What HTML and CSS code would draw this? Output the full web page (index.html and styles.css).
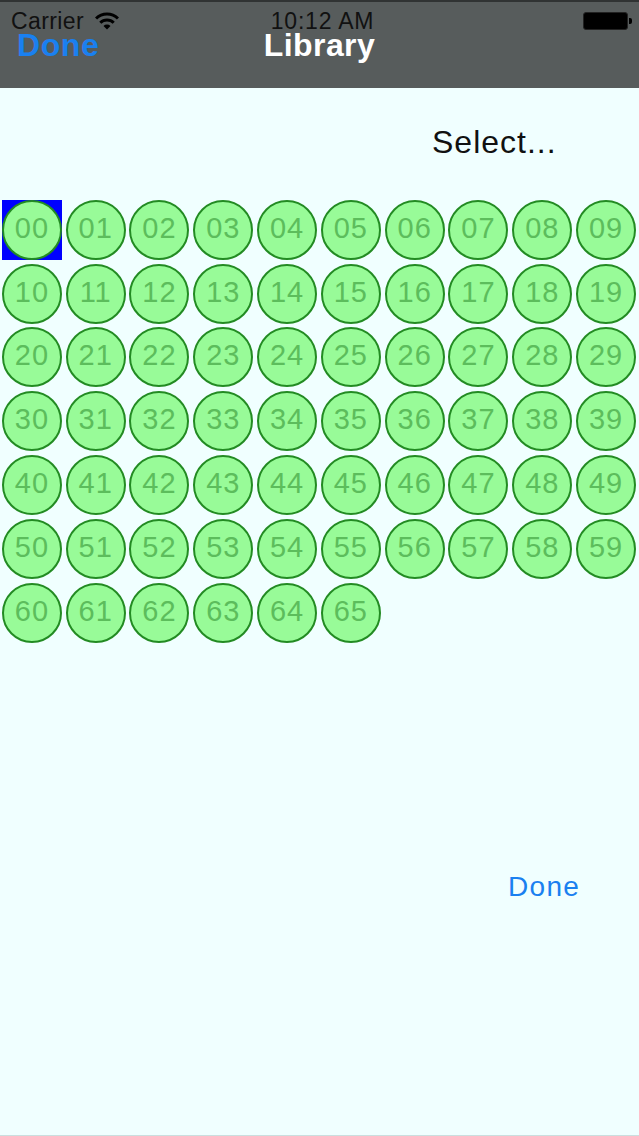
FILE: index.html
```
<!DOCTYPE html>
<html>
<head>
<meta charset="utf-8">
<title>Library</title>
<link rel="stylesheet" href="styles.css">
</head>
<body>
<div class="screen">
  <header class="header">
    <div class="status">
      <div class="status-left">
        <span class="carrier">Carrier</span>
        <svg class="wifi" width="24" height="18" viewBox="0 0 24 18">
          <path d="M1.04 6.54 A15.5 15.5 0 0 1 22.96 6.54" fill="none" stroke="#000" stroke-width="3"/>
          <path d="M5.28 10.78 A9.5 9.5 0 0 1 18.72 10.78" fill="none" stroke="#000" stroke-width="3"/>
          <path d="M12 17.5 L8.5 14 A5 5 0 0 1 15.5 14 Z" fill="#000"/>
        </svg>
      </div>
      <div class="time">10:12 AM</div>
      <div class="status-right">
        <span class="battery"><span class="battery-nub"></span></span>
      </div>
    </div>
    <div class="nav">
      <div class="nav-left"><span class="nav-done">Done</span></div>
      <div class="nav-title">Library</div>
      <div class="nav-right"></div>
    </div>
  </header>
  <main class="content">
    <div class="select">Select...</div>
    <div class="grid" id="grid"></div>
    <div class="bottom-done">Done</div>
  </main>
</div>
<script src="app.js"></script>
</body>
</html>
```
FILE: app.js
```
var grid = document.getElementById('grid');
for (var i = 0; i < 66; i++) {
  var cell = document.createElement('div');
  cell.className = 'cell' + (i === 0 ? ' selected' : '');
  var box = document.createElement('div');
  box.className = 'box';
  var c = document.createElement('div');
  c.className = 'circle';
  var t = String(Math.floor(i / 10)) + String(i % 10);
  c.textContent = t;
  box.appendChild(c);
  cell.appendChild(box);
  grid.appendChild(cell);
}
```
FILE: styles.css
```
html, body {
  margin: 0;
  padding: 0;
}
body {
  background: #f0ffff;
  font-family: "Liberation Sans", Arial, sans-serif;
}
.screen {
  height: 1136px;
  box-sizing: border-box;
  border-bottom: 1px solid #cadfdf;
  display: flex;
  flex-direction: column;
}
.header {
  height: 88px;
  box-sizing: border-box;
  background: #575c5c;
  border-top: 2px solid #303333;
}
.status {
  display: grid;
  grid-template-columns: 1fr auto 1fr;
  align-items: end;
  height: 29px;
}
.status-left {
  display: flex;
  align-items: flex-end;
  padding-left: 11px;
  gap: 11px;
}
.carrier, .time {
  font-size: 23px;
  line-height: 18px;
  color: #111;
}
.carrier {
  padding-bottom: 1px;
  letter-spacing: 0.4px;
}
.wifi {
  display: block;
  margin-bottom: 1px;
}
.time {
  padding-left: 6px;
  padding-bottom: 1px;
  letter-spacing: 0.8px;
}
.status-right {
  display: flex;
  justify-content: flex-end;
  padding-right: 11px;
  align-self: start;
  padding-top: 10px;
}
.battery {
  position: relative;
  display: block;
  width: 45px;
  height: 18px;
  box-sizing: border-box;
  background: #000;
  border: 1px solid #222;
  border-radius: 3px;
}
.battery-nub {
  position: absolute;
  right: -5px;
  top: 5px;
  width: 3px;
  height: 6px;
  background: #000;
  border-radius: 0 2px 2px 0;
}
.nav {
  display: grid;
  grid-template-columns: 1fr auto 1fr;
  font-size: 32px;
  font-weight: bold;
  line-height: 28px;
}
.nav-left {
  padding-left: 17px;
}
.nav-done {
  color: #1a80f0;
  letter-spacing: 0.6px;
}
.nav-title {
  color: #fff;
  letter-spacing: 0.4px;
}
.content {
  flex: 1;
}
.select {
  padding-top: 38px;
  padding-left: 432px;
  font-size: 32px;
  line-height: 32px;
  letter-spacing: 1px;
  color: #111;
}
.grid {
  margin-top: 40px;
  display: grid;
  grid-template-columns: repeat(10, 63.8px);
  grid-auto-rows: 63.8px;
}
.cell {
  display: flex;
  align-items: center;
  justify-content: center;
}
.box {
  width: 60px;
  height: 60px;
}
.cell.selected .box {
  background: #0000ff;
}
.circle {
  width: 60px;
  height: 60px;
  box-sizing: border-box;
  border-radius: 50%;
  background: #98fb98;
  border: 2px solid #238b23;
  display: flex;
  align-items: center;
  justify-content: center;
  font-size: 29px;
  letter-spacing: 1px;
  color: #5cbd5c;
  padding-bottom: 3px;
}
.bottom-done {
  margin-top: 228px;
  padding-left: 508px;
  font-size: 28px;
  line-height: 28px;
  letter-spacing: 1.3px;
  color: #1a80f0;
}
```
